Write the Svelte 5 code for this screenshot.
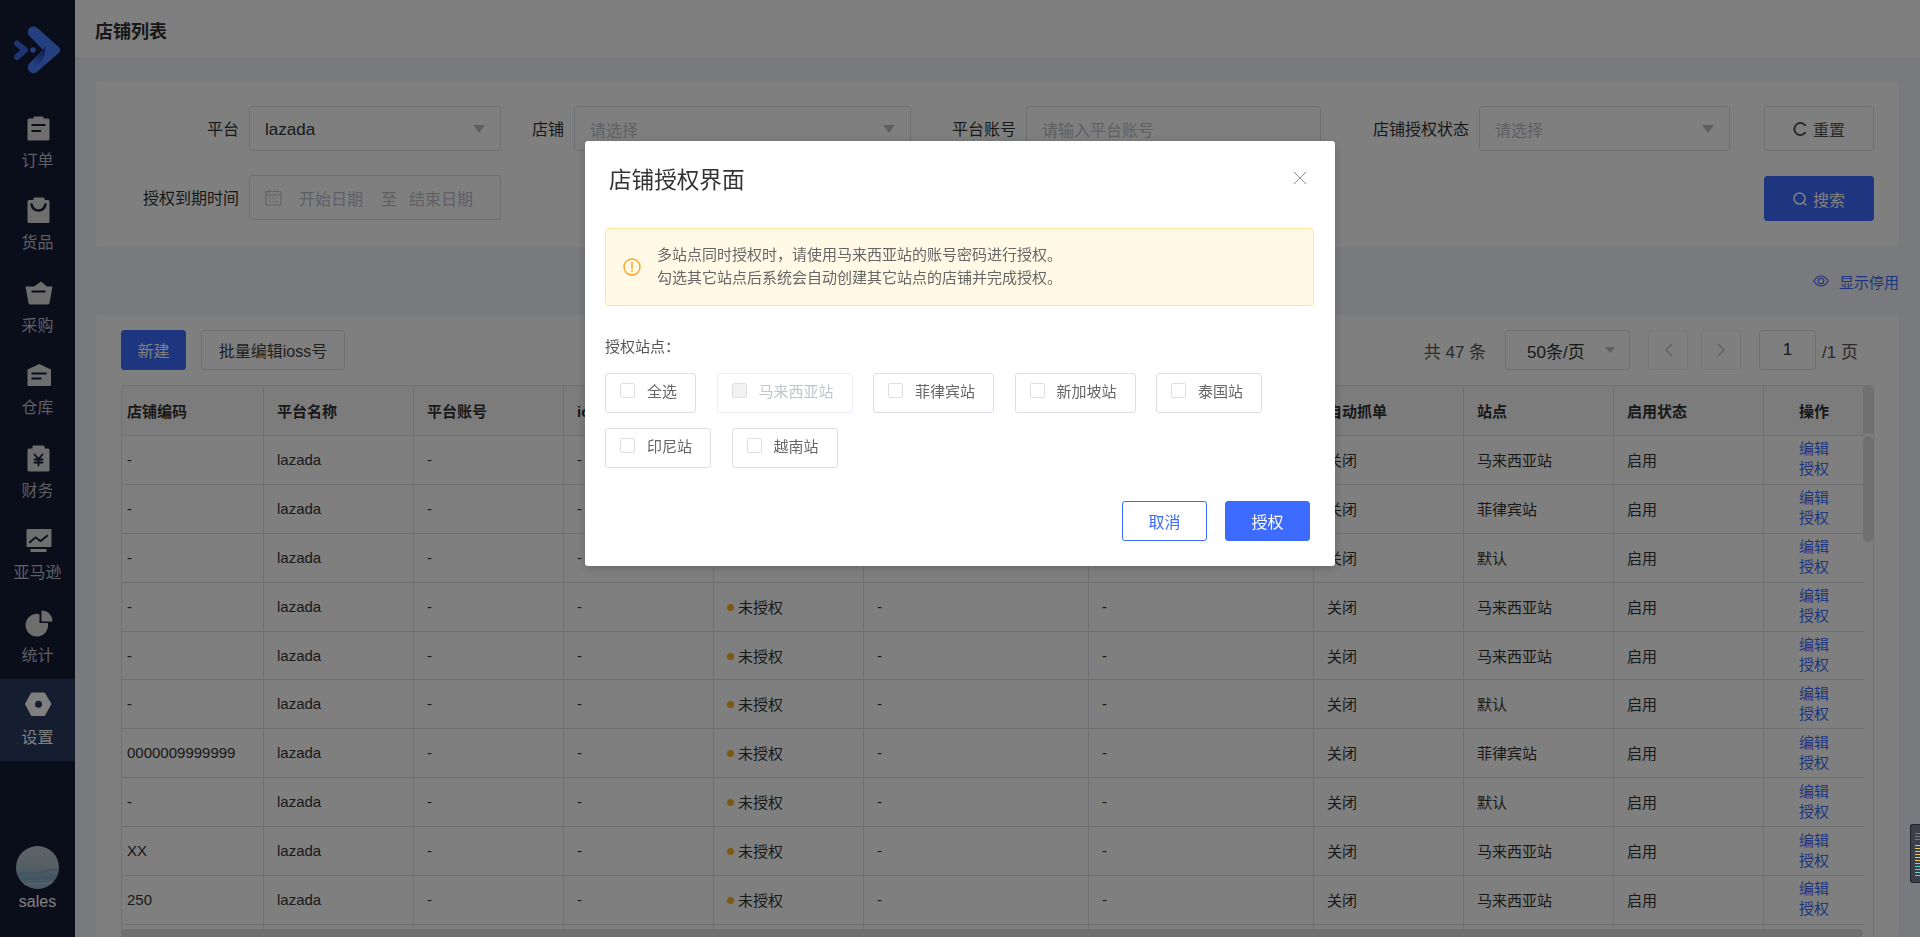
<script>
  const navItems = [
    { key: 'order', label: '订单' },
    { key: 'goods', label: '货品' },
    { key: 'buy', label: '采购' },
    { key: 'store', label: '仓库' },
    { key: 'money', label: '财务' },
    { key: 'amazon', label: '亚马逊' },
    { key: 'stats', label: '统计' },
    { key: 'setting', label: '设置', active: true }
  ];

  const columns = ['店铺编码', '平台名称', '平台账号', 'ioss号', '授权状态', '授权时间', '到期时间', '自动抓单', '站点', '启用状态', '操作'];

  const rows = [
    { code: '-', site: '马来西亚站' },
    { code: '-', site: '菲律宾站' },
    { code: '-', site: '默认' },
    { code: '-', site: '马来西亚站' },
    { code: '-', site: '马来西亚站' },
    { code: '-', site: '默认' },
    { code: '0000009999999', site: '菲律宾站' },
    { code: '-', site: '默认' },
    { code: 'XX', site: '马来西亚站' },
    { code: '250', site: '马来西亚站' }
  ];

  const sites = [
    { label: '全选' },
    { label: '马来西亚站', disabled: true },
    { label: '菲律宾站' },
    { label: '新加坡站' },
    { label: '泰国站' },
    { label: '印尼站' },
    { label: '越南站' }
  ];

  const meterBars = ['gray', 'gray', 'gray', 'off', 'yellow', 'yellow', 'yellow', 'yellow', 'yellow', 'yellow', 'teal', 'teal', 'teal', 'teal', 'teal'];
</script>

<div class="app">
  <aside class="sidebar">
    <svg class="logo" width="75" height="101" viewBox="0 0 75 101">
      <defs>
        <linearGradient id="fold" x1="0.9" y1="0.2" x2="0.2" y2="0.9">
          <stop offset="0" stop-color="#1f3fa8" />
          <stop offset="1" stop-color="#4a80ff" />
        </linearGradient>
      </defs>
      <path d="M29.5 36a5.6 5.6 0 0 1 8-8L59 47.2a3.8 3.8 0 0 1 0 5.6L37.5 71.5a5.6 5.6 0 0 1-8-8L43 50z" fill="#4a80ff" />
      <path d="M43 50 29.5 63.5c-.6.7-1 1.400-1.200 2.200 7 3 18-4 17-20z" fill="url(#fold)" />
      <path d="M17 43.500 25 50l-8 7" fill="none" stroke="#3f68e6" stroke-width="6" stroke-linecap="round" stroke-linejoin="round" />
      <circle cx="33" cy="50" r="2.800" fill="#4a80ff" />
    </svg>

    <nav class="nav">
      {#each navItems as item}
        <div class="nav-item" class:active={item.active}>
          <svg class="nav-icon" width="30" height="28" viewBox="0 0 30 28">
            {#if item.key === 'order'}
              <rect x="4.500" y="3.500" width="22" height="22" rx="1.500" />
              <rect x="10.500" y="1.500" width="10" height="4" rx="1" />
              <rect class="cut" x="8.500" y="9" width="14" height="2" />
              <rect class="cut" x="8.500" y="15" width="9.500" height="2" />
            {:else if item.key === 'goods'}
              <rect x="4.500" y="3" width="22" height="23" rx="1.500" />
              <rect x="10.500" y="0.500" width="11" height="4" rx="1" />
              <path class="cut-line" d="M8.500 7.500c1 4 3.500 6 7 6s6-2 7-6" stroke-width="2.500" />
            {:else if item.key === 'buy'}
              <path d="M2.500 6.500H11L18 1.500l6 5h5.500L26.500 23a2 2 0 0 1-2 1.500h-17a2 2 0 0 1-2-1.500z" />
              <rect class="cut" x="8.500" y="10.500" width="14" height="2" />
            {:else if item.key === 'store'}
              <path d="M4.500 7.500 16.200 2 28 7.500V23a1 1 0 0 1-1 1H5.500a1 1 0 0 1-1-1z" />
              <rect class="cut" x="8.500" y="10.500" width="15" height="2" />
              <rect class="cut" x="8.500" y="15.500" width="10" height="2" />
            {:else if item.key === 'money'}
              <rect x="4.500" y="3.500" width="22" height="23" rx="1.500" />
              <rect x="9.500" y="0.500" width="12" height="5" rx="1" />
              <path class="cut-line" d="M11.500 9.500l4 4.500 4-4.500M15.500 14v6.500M11.500 14.500h8M11.500 17.500h8" stroke-width="1.800" />
            {:else if item.key === 'amazon'}
              <rect x="3.500" y="2" width="25" height="18" rx="1" />
              <rect x="7.500" y="22" width="16" height="3" />
              <path class="cut-line" d="M6.800 15.300l5.700-5 5 3.700 6.700-5.300" stroke-width="1.800" />
            {:else if item.key === 'stats'}
              <path d="M16.500 4.200V13h8.400A11.300 11.300 0 1 1 16.500 4.200z" />
              <path d="M18.500.5a11 11 0 0 1 11 11h-11z" />
            {:else}
              <path d="M8.500 1h13L28 12l-6.500 11.500h-13L2.500 12z" stroke="currentColor" stroke-width="1" stroke-linejoin="round" />
              <circle class="cut" cx="15.500" cy="12.200" r="3.500" />
            {/if}
          </svg>
          <span class="nav-label">{item.label}</span>
        </div>
      {/each}
    </nav>

    <div class="user">
      <svg class="avatar" width="43" height="43" viewBox="0 0 43 43">
        <defs>
          <clipPath id="round"><circle cx="21.500" cy="21.500" r="21.500" /></clipPath>
          <linearGradient id="sea" x1="0" y1="0" x2="0" y2="1">
            <stop offset="0" stop-color="#b9c9cf" />
            <stop offset="0.5" stop-color="#a9bec8" />
            <stop offset="0.75" stop-color="#86adc6" />
            <stop offset="1" stop-color="#9dbccd" />
          </linearGradient>
        </defs>
        <g clip-path="url(#round)">
          <rect width="43" height="43" fill="url(#sea)" />
          <path d="M0 28c8-3 14 1 22-1s14-5 21-3" fill="none" stroke="#7fa9c6" stroke-width="1.500" />
          <path d="M0 34c10-3 18 0 26-2s12-2 17-3" fill="none" stroke="#7ea8c8" stroke-width="1.500" />
          <path d="M2 39c10-2 20 0 38-3" fill="none" stroke="#bdd0dc" stroke-width="1.200" />
        </g>
      </svg>
      <span class="user-name">sales</span>
    </div>
  </aside>

  <main class="main">
    <header class="topbar"><h1>店铺列表</h1></header>

    <div class="content">
      <section class="filter card">
        <span class="field-label">平台</span>
        <div class="select"><span class="value">lazada</span><i class="caret"></i></div>
        <span class="field-label">店铺</span>
        <div class="select"><span class="placeholder">请选择</span><i class="caret"></i></div>
        <span class="field-label">平台账号</span>
        <div class="select"><span class="placeholder">请输入平台账号</span></div>
        <span class="field-label">店铺授权状态</span>
        <div class="select"><span class="placeholder">请选择</span><i class="caret"></i></div>
        <div class="filter-action">
          <button class="btn plain">
            <svg width="14" height="14" viewBox="0 0 14 14" fill="none" stroke="currentColor" stroke-width="2"><path d="M12 3.200A6 6 0 1 0 12 10.800" stroke-linecap="round" /></svg>
            重置
          </button>
        </div>

        <span class="field-label">授权到期时间</span>
        <div class="select date">
          <svg class="cal" width="17" height="17" viewBox="0 0 17 17" fill="none" stroke="currentColor" stroke-width="1.200">
            <rect x="1" y="2.500" width="15" height="13.500" rx="1" />
            <path d="M1 6h15M4.500.5v3M12.500.5v3" />
            <path d="M4 9h2M7.500 9h2M11 9h2M4 12.500h2M7.500 12.500h2M11 12.500h2" />
          </svg>
          <span class="placeholder">开始日期</span>
          <span class="placeholder to">至</span>
          <span class="placeholder">结束日期</span>
        </div>
        <div class="filter-action search-slot">
          <button class="btn primary">
            <svg width="14" height="14" viewBox="0 0 14 14" fill="none" stroke="currentColor" stroke-width="1.600"><circle cx="6.500" cy="6.500" r="5.500" /><path d="M10.500 10.500l2.500 2.500" stroke-linecap="round" /></svg>
            搜索
          </button>
        </div>
      </section>

      <div class="show-off">
        <svg width="16" height="12" viewBox="0 0 16 12" fill="none" stroke="currentColor" stroke-width="1.100">
          <path d="M.8 6C3 2.500 5.300 1 8 1s5 1.500 7.200 5C13 9.500 10.700 11 8 11S3 9.500.8 6z" />
          <circle cx="8" cy="6" r="2.800" />
        </svg>
        <span>显示停用</span>
      </div>

      <section class="list card">
        <div class="toolbar">
          <button class="btn primary small">新建</button>
          <button class="btn plain small batch">批量编辑ioss号</button>
          <div class="pager">
            <span class="total">共 47 条</span>
            <div class="select size"><span>50条/页</span><i class="caret small-caret"></i></div>
            <span class="page-btn">
              <svg width="9" height="14" viewBox="0 0 9 14" fill="none" stroke="currentColor" stroke-width="1.500"><path d="M8 1 2 7l6 6" /></svg>
            </span>
            <span class="page-btn next">
              <svg width="9" height="14" viewBox="0 0 9 14" fill="none" stroke="currentColor" stroke-width="1.500"><path d="m1 1 6 6-6 6" /></svg>
            </span>
            <span class="page-input">1</span>
            <span class="page-count">/1 页</span>
          </div>
        </div>

        <div class="table">
          <div class="row head">
            {#each columns as col}
              <div class="cell">{col}</div>
            {/each}
          </div>
          {#each rows as row}
            <div class="row">
              <div class="cell">{row.code}</div>
              <div class="cell">lazada</div>
              <div class="cell">-</div>
              <div class="cell">-</div>
              <div class="cell"><i class="dot"></i>未授权</div>
              <div class="cell">-</div>
              <div class="cell">-</div>
              <div class="cell">关闭</div>
              <div class="cell">{row.site}</div>
              <div class="cell">启用</div>
              <div class="cell ops"><a href="#edit">编辑</a><a href="#auth">授权</a></div>
            </div>
          {/each}
          <!-- next row only peeks out above the scrollbar -->
          <div class="row">
            {#each columns as col}
              <div class="cell"></div>
            {/each}
          </div>
          <div class="vbar-head"></div>
          <div class="vbar"></div>
          <div class="hbar"></div>
        </div>
      </section>
    </div>
  </main>

  <div class="mask">
    <div class="modal">
      <h2>店铺授权界面</h2>
      <svg class="close" width="14" height="14" viewBox="0 0 14 14" fill="none" stroke="currentColor" stroke-width="1"><path d="M1 1l12 12M13 1 1 13" /></svg>

      <div class="alert">
        <svg width="18" height="18" viewBox="0 0 18 18" fill="none" stroke="currentColor" stroke-width="1.400">
          <circle cx="9" cy="9" r="8" />
          <path d="M9 4.500v6M9 12.500v1.300" stroke-linecap="round" />
        </svg>
        <p>多站点同时授权时，请使用马来西亚站的账号密码进行授权。<br />勾选其它站点后系统会自动创建其它站点的店铺并完成授权。</p>
      </div>

      <div class="sites-title">授权站点：</div>
      <div class="sites">
        {#each sites as site}
          <div class="site" class:disabled={site.disabled}>
            <i class="check"></i>{site.label}
          </div>
        {/each}
      </div>

      <div class="modal-foot">
        <button class="m-btn ghost">取消</button>
        <button class="m-btn solid">授权</button>
      </div>
    </div>
  </div>

  <div class="meter">
    {#each meterBars as bar}
      <i class={bar}></i>
    {/each}
  </div>
</div>

<style>
  :global(body) {
    margin: 0;
    font-family: "Liberation Sans", "Noto Sans CJK SC", sans-serif;
    color: #333;
  }

  .app {
    display: flex;
    height: 100vh;
    overflow: hidden;
    background: #f2f4fa;
  }

  /* sidebar */
  .sidebar {
    width: 75px;
    flex-shrink: 0;
    display: flex;
    flex-direction: column;
    background: #141a34;
  }

  .logo { display: block; flex-shrink: 0; }

  .nav-item {
    height: 82.5px;
    display: flex;
    flex-direction: column;
    align-items: center;
    padding-top: 13.5px;
    box-sizing: border-box;
    color: #dcdcdc;
    --cut: #141a34;
  }

  .nav-item.active {
    background: #283c60;
    color: #fff;
    --cut: #283c60;
  }

  .nav-icon { fill: currentColor; display: block; }
  .nav-icon .cut { fill: var(--cut); }
  .nav-icon .cut-line { fill: none; stroke: var(--cut); stroke-linecap: round; }

  .nav-label {
    margin-top: 7px;
    font-size: 16px;
    line-height: 22px;
    color: #bcbfc8;
  }

  .active .nav-label { color: #fff; }

  .user {
    margin-top: auto;
    display: flex;
    flex-direction: column;
    align-items: center;
    padding-bottom: 24px;
  }

  .avatar { display: block; }

  .user-name {
    margin-top: 2px;
    font-size: 16px;
    line-height: 22px;
    color: #fff;
  }

  /* main */
  .main {
    flex: 1;
    min-width: 0;
    display: flex;
    flex-direction: column;
  }

  .topbar {
    height: 59px;
    flex-shrink: 0;
    display: flex;
    align-items: center;
    padding-left: 20px;
    background: #fff;
    border-bottom: 1px solid #e6e8ee;
    box-sizing: border-box;
  }

  .topbar h1 {
    margin: 1px 0 0;
    font-size: 18px;
    font-weight: 700;
    color: #333;
  }

  .content {
    flex: 1;
    min-height: 0;
    display: flex;
    flex-direction: column;
    padding: 22px 21px 0;
  }

  .card {
    background: #fff;
    border-radius: 4px;
  }

  .filter {
    height: 166px;
    flex-shrink: 0;
    box-sizing: border-box;
    display: grid;
    grid-template-columns: 153px 252px 73px 337px 115px 295px 158px 251px 1fr;
    grid-template-rows: 45px 45px;
    row-gap: 24px;
    padding-top: 25px;
    align-items: center;
  }

  .field-label {
    font-size: 16px;
    color: #333;
    text-align: right;
    padding-right: 10px;
    margin-top: -2px;
  }

  .select {
    height: 45px;
    box-sizing: border-box;
    border: 1px solid #dcdfe6;
    border-radius: 3px;
    display: flex;
    align-items: center;
    justify-content: space-between;
    padding: 0 15px;
    font-size: 16px;
    color: #333;
  }

  .value { font-size: 17px; margin-top: 2px; }

  .placeholder { color: #bcc0c8; }

  .caret {
    width: 0;
    height: 0;
    border-left: 6px solid transparent;
    border-right: 6px solid transparent;
    border-top: 8px solid #bfbfbf;
  }

  .date { justify-content: flex-start; }
  .cal { color: #c4c7cf; margin-right: 17px; flex-shrink: 0; }
  .to { margin: 0 12px 0 18px; }

  .filter-action {
    padding-left: 34px;
  }

  .search-slot { grid-column: 9; margin-top: 2px; }

  .btn {
    display: inline-flex;
    align-items: center;
    justify-content: center;
    gap: 6px;
    width: 110px;
    height: 45px;
    padding: 0;
    border-radius: 3px;
    font: inherit;
    font-size: 16px;
    cursor: pointer;
    box-sizing: border-box;
  }

  .btn.plain {
    background: #fff;
    border: 1px solid #dcdfe6;
    color: #555;
  }

  .btn.primary {
    background: #3d6bff;
    border: 1px solid #3d6bff;
    color: #fff;
  }

  .btn.small { width: 65px; height: 40px; }
  .btn.batch { width: 144px; margin-left: 15px; color: #444; }

  .show-off {
    height: 68px;
    flex-shrink: 0;
    display: flex;
    align-items: center;
    justify-content: flex-end;
    gap: 10px;
    font-size: 15px;
    color: #3d6bff;
  }

  .list {
    flex: 1;
    min-height: 0;
    display: flex;
    flex-direction: column;
    padding: 15px 25px 0;
  }

  .toolbar {
    display: flex;
    align-items: center;
    height: 40px;
    flex-shrink: 0;
    margin-bottom: 15px;
  }

  .pager {
    margin-left: auto;
    padding-right: 16px;
    display: flex;
    align-items: center;
    font-size: 17px;
    color: #555;
  }

  .select.size {
    width: 125px;
    height: 40px;
    margin-left: 19px;
    padding: 0 14px 0 21px;
    font-size: 17px;
  }

  .small-caret {
    border-left-width: 5px;
    border-right-width: 5px;
    border-top-width: 6px;
  }

  .page-btn {
    width: 40px;
    height: 40px;
    box-sizing: border-box;
    margin-left: 18px;
    border: 1px solid #ebeef5;
    border-radius: 3px;
    display: flex;
    align-items: center;
    justify-content: center;
    color: #c0c4cc;
  }

  .page-btn.next { margin-left: 13px; }

  .page-input {
    width: 57px;
    height: 40px;
    box-sizing: border-box;
    margin-left: 18px;
    border: 1px solid #dcdfe6;
    border-radius: 3px;
    display: flex;
    align-items: center;
    justify-content: center;
    color: #333;
  }

  .page-count { margin-left: 6px; }

  /* table */
  .table {
    position: relative;
    flex: 1;
    min-height: 0;
    overflow: hidden;
    border: 1px solid #dee0e5;
    border-bottom: 0;
    border-radius: 4px 4px 0 0;
    margin-bottom: -1px;
  }

  .row {
    display: grid;
    grid-template-columns: 142px 150px 150px 150px 150px 225px 225px 150px 150px 150px 100px;
    width: 1742px;
    height: 48.9px;
    box-sizing: border-box;
    border-bottom: 1px solid #dee0e5;
    font-size: 15px;
    color: #333;
  }

  .row.head {
    height: 50px;
    background: #f8f9fb;
    font-weight: 700;
    font-size: 15px;
  }

  .cell {
    display: flex;
    align-items: center;
    padding: 0 0 1px 13px;
    border-right: 1px solid #dee0e5;
    white-space: nowrap;
    overflow: hidden;
  }

  .cell:first-child { padding-left: 5px; }
  .cell:last-child { border-right: 0; }
  .head .cell:last-child { justify-content: center; padding-left: 0; }

  .cell.ops {
    flex-direction: column;
    justify-content: center;
    padding-left: 0;
    line-height: 20px;
  }

  .ops a {
    color: #3d6bff;
    text-decoration: none;
  }

  .dot {
    width: 7px;
    height: 7px;
    margin: 2px 4px 0 0;
    border-radius: 50%;
    background: #ffb020;
    flex-shrink: 0;
  }

  .vbar-head, .vbar {
    position: absolute;
    right: 0;
    width: 10px;
    background: #e0e0e0;
  }

  .vbar-head {
    top: 0;
    height: 48px;
    border-radius: 0 5px 0 0;
  }

  .vbar {
    top: 50px;
    height: 106px;
    border-radius: 5px;
  }

  .hbar {
    position: absolute;
    left: 0;
    right: 10px;
    bottom: 0;
    height: 9px;
    background: #dedede;
    border-radius: 0 5px 5px 0;
  }

  /* modal */
  .mask {
    position: fixed;
    inset: 0;
    background: rgba(0, 0, 0, 0.5);
    display: flex;
    justify-content: center;
    align-items: flex-start;
    padding-top: 141px;
    box-sizing: border-box;
  }

  .modal {
    position: relative;
    width: 750px;
    box-sizing: border-box;
    padding: 24px 21px 25px 20px;
    background: #fff;
    border-radius: 3px;
    box-shadow: 0 2px 10px rgba(0, 0, 0, 0.2);
  }

  .modal h2 {
    margin: 1px 0 -1px 4px;
    font-size: 22.6px;
    font-weight: 400;
    line-height: 30px;
    color: #333;
  }

  .close {
    position: absolute;
    top: 30px;
    right: 28px;
    color: #8a8f99;
  }

  .alert {
    margin-top: 33px;
    height: 78px;
    box-sizing: border-box;
    display: flex;
    align-items: center;
    gap: 16px;
    padding-left: 17px;
    background: #fff9e6;
    border: 1px solid #ffe59a;
    border-radius: 4px;
    color: #f5a623;
  }

  .alert svg { flex-shrink: 0; }

  .alert p {
    margin: -2px 0 0;
    font-size: 15px;
    line-height: 23px;
    color: #666;
  }

  .sites-title {
    margin-top: 30px;
    font-size: 15px;
    line-height: 22px;
    color: #555;
  }

  .sites {
    margin-top: 15px;
    display: flex;
    flex-wrap: wrap;
    gap: 15px 20.5px;
  }

  .site {
    height: 40px;
    box-sizing: border-box;
    display: flex;
    align-items: center;
    padding: 0 18px 6px 14px;
    border: 1px solid #dcdfe6;
    border-radius: 3px;
    font-size: 15px;
    color: #666;
  }

  .check {
    width: 15px;
    height: 15px;
    margin-right: 12px;
    box-sizing: border-box;
    border: 1px solid #dcdfe6;
    border-radius: 2px;
    background: #fff;
  }

  .site.disabled {
    border-color: #ebeef5;
    color: #c0c4cc;
  }

  .site.disabled .check { background: #f2f2f2; }

  .modal-foot {
    margin-top: 33px;
    padding-right: 4px;
    display: flex;
    justify-content: flex-end;
    gap: 18px;
  }

  .m-btn {
    width: 85px;
    height: 40px;
    padding: 0;
    border-radius: 3px;
    font: inherit;
    font-size: 16px;
    cursor: pointer;
  }

  .m-btn.ghost {
    background: #fff;
    border: 1px solid #3d6bff;
    color: #3d6bff;
  }

  .m-btn.solid {
    background: #3d6bff;
    border: 1px solid #3d6bff;
    color: #fff;
  }

  /* little level widget sitting on the window edge */
  .meter {
    position: fixed;
    top: 824px;
    right: 0;
    width: 10px;
    height: 59px;
    box-sizing: border-box;
    padding: 8px 0 0 4px;
    display: flex;
    flex-direction: column;
    gap: 2px;
    background: #3b404c;
    border: 1px solid #1f2229;
    border-right: 0;
    border-radius: 3px 0 0 3px;
  }

  .meter i { display: block; height: 1px; flex-shrink: 0; }
  .meter .gray { background: #777; }
  .meter .off { background: transparent; }
  .meter .yellow { background: #e5c95a; }
  .meter .teal { background: #63d6c4; }
</style>
